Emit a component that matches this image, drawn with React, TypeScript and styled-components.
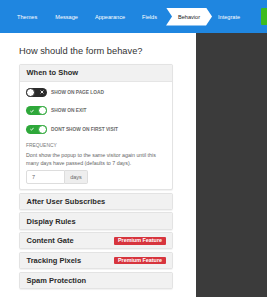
import React from "react";
import styled, { createGlobalStyle } from "styled-components";

const Global = createGlobalStyle`
  html, body { margin: 0; padding: 0; background: #fff; }
  body { font-family: "Liberation Sans", Arial, sans-serif; -webkit-font-smoothing: antialiased; }
  * { box-sizing: border-box; }
`;

const Page = styled.div`
  width: 267px;
  height: 297px;
  display: flex;
  flex-direction: column;
  overflow: hidden;
`;

const TopBar = styled.div`
  height: 33px;
  background: #1f86e0;
  display: flex;
  align-items: center;
  padding-left: 17px;
  flex-shrink: 0;
`;

const NavItem = styled.div<{ $gap: number }>`
  color: #fff;
  font-size: 5.6px;
  margin-right: ${(p) => p.$gap}px;
  white-space: nowrap;
`;

const ActiveTab = styled.div`
  height: 18px;
  width: 46px;
  background: #fff;
  color: #222;
  font-size: 5.6px;
  display: flex;
  align-items: center;
  justify-content: center;
  margin-right: 6px;
  clip-path: polygon(0 0, 40px 0, 46px 50%, 40px 100%, 0 100%, 6px 50%);
`;

const GreenButton = styled.div`
  margin-left: auto;
  width: 6px;
  height: 17px;
  background: #3dbb1f;
  border-radius: 1px 0 0 1px;
`;

const Body = styled.div`
  flex: 1;
  display: flex;
`;

const Main = styled.div`
  width: 196px;
  padding: 10px 23px 0 19px;
  background: #fff;
`;

const Side = styled.div`
  flex: 1;
  background: #3b3b3b;
`;

const Heading = styled.div`
  font-size: 9.3px;
  color: #333;
  line-height: 11px;
  margin: 2.5px 0 0 0;
`;

const Panel = styled.div<{ $first?: boolean }>`
  border: 1px solid #e3e3e3;
  border-radius: 2px;
  background: #fff;
  box-shadow: 0 0.5px 1px rgba(0, 0, 0, 0.06);
  margin-top: ${(p) => (p.$first ? 7.5 : 2.6)}px;
  overflow: hidden;
`;

const PanelHeader = styled.div<{ $open?: boolean }>`
  height: ${(p) => (p.$open ? 16.5 : 15.2)}px;
  background: #f1f1f1;
  display: flex;
  align-items: center;
  justify-content: space-between;
  padding: 0 6px 0 6.5px;
  font-weight: bold;
  font-size: 7.5px;
  color: #2a2a2a;
  border-bottom: ${(p) => (p.$open ? "1px solid #e5e5e5" : "none")};
`;

const Badge = styled.span`
  background: #d7343d;
  color: #fff;
  font-size: 5.4px;
  font-weight: bold;
  height: 7.7px;
  line-height: 7.7px;
  padding: 0 4px;
  border-radius: 1px;
`;

const PanelBody = styled.div`
  padding: 6px 6px 5px 6px;
`;

const ToggleRow = styled.div`
  display: flex;
  align-items: center;
  height: 9px;
  margin-bottom: 9.5px;
`;

const Track = styled.div<{ $on: boolean }>`
  width: 21px;
  height: 9px;
  border-radius: 5px;
  background: ${(p) => (p.$on ? "#2ea83a" : "#2b2b2b")};
  position: relative;
  flex-shrink: 0;
  margin-right: 4px;
`;

const Knob = styled.div<{ $on: boolean }>`
  position: absolute;
  top: 0;
  ${(p) => (p.$on ? "right: 0;" : "left: 0;")}
  width: 9px;
  height: 9px;
  border-radius: 50%;
  background: #fff;
  border: 1px solid ${(p) => (p.$on ? "#2ea83a" : "#2b2b2b")};
`;

const Mark = styled.svg<{ $on: boolean }>`
  position: absolute;
  top: 2.5px;
  ${(p) => (p.$on ? "left: 3.5px;" : "right: 3.5px;")}
  width: 4px;
  height: 4px;
`;

const ToggleLabel = styled.span`
  font-size: 4.8px;
  font-weight: bold;
  color: #6a6a6a;
`;

const FieldLabel = styled.div`
  font-size: 4.9px;
  color: #777;
  margin-top: 3px;
`;

const Help = styled.div`
  font-size: 5.3px;
  line-height: 8.3px;
  color: #666;
  margin-top: 2.5px;
`;

const InputGroup = styled.div`
  display: flex;
  margin-top: 3px;
  height: 14px;
`;

const Input = styled.div`
  width: 39px;
  border: 1px solid #ddd;
  border-radius: 2px 0 0 2px;
  font-size: 5.5px;
  color: #666;
  display: flex;
  align-items: center;
  padding-left: 5px;
`;

const Addon = styled.div`
  width: 23px;
  border: 1px solid #ddd;
  border-left: none;
  background: #eee;
  border-radius: 0 2px 2px 0;
  font-size: 5.5px;
  color: #666;
  display: flex;
  align-items: center;
  justify-content: center;
`;

const Toggle = ({ on, label }: { on: boolean; label: string }) => (
  <ToggleRow>
    <Track $on={on}>
      {on ? (
        <Mark $on viewBox="0 0 4 4">
          <path d="M0.4 2.1 L1.5 3.2 L3.6 0.8" stroke="#fff" strokeWidth="0.9" fill="none" />
        </Mark>
      ) : (
        <Mark $on={false} viewBox="0 0 4 4">
          <path d="M0.6 0.6 L3.4 3.4 M3.4 0.6 L0.6 3.4" stroke="#fff" strokeWidth="0.9" />
        </Mark>
      )}
      <Knob $on={on} />
    </Track>
    <ToggleLabel>{label}</ToggleLabel>
  </ToggleRow>
);

export default function App() {
  return (
    <Page>
      <Global />
      <TopBar>
        <NavItem $gap={18}>Themes</NavItem>
        <NavItem $gap={17}>Message</NavItem>
        <NavItem $gap={17}>Appearance</NavItem>
        <NavItem $gap={9}>Fields</NavItem>
        <ActiveTab>Behavior</ActiveTab>
        <NavItem $gap={0}>Integrate</NavItem>
        <GreenButton />
      </TopBar>
      <Body>
        <Main>
          <Heading>How should the form behave?</Heading>
          <Panel $first>
            <PanelHeader $open>When to Show</PanelHeader>
            <PanelBody>
              <Toggle on={false} label="SHOW ON PAGE LOAD" />
              <Toggle on label="SHOW ON EXIT" />
              <Toggle on label="DONT SHOW ON FIRST VISIT" />
              <FieldLabel>FREQUENCY</FieldLabel>
              <Help>
                Dont show the popup to the same visitor again until this many days have passed
                (defaults to 7 days).
              </Help>
              <InputGroup>
                <Input>7</Input>
                <Addon>days</Addon>
              </InputGroup>
            </PanelBody>
          </Panel>
          <Panel>
            <PanelHeader>After User Subscribes</PanelHeader>
          </Panel>
          <Panel>
            <PanelHeader>Display Rules</PanelHeader>
          </Panel>
          <Panel>
            <PanelHeader>
              Content Gate<Badge>Premium Feature</Badge>
            </PanelHeader>
          </Panel>
          <Panel>
            <PanelHeader>
              Tracking Pixels<Badge>Premium Feature</Badge>
            </PanelHeader>
          </Panel>
          <Panel>
            <PanelHeader>Spam Protection</PanelHeader>
          </Panel>
        </Main>
        <Side />
      </Body>
    </Page>
  );
}
